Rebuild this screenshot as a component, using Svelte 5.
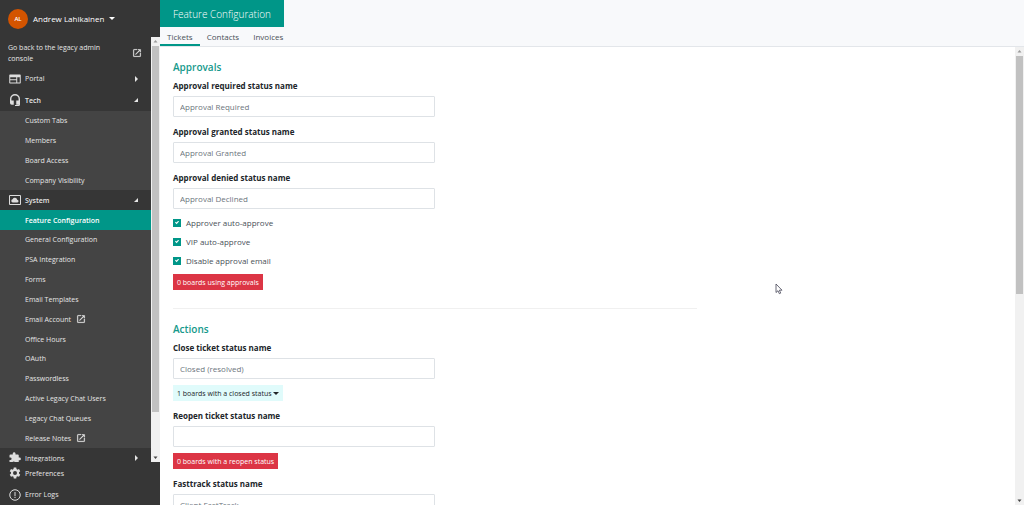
<script>
  const techItems = ['Custom Tabs', 'Members', 'Board Access', 'Company Visibility'];
  const systemItems = [
    { name: 'Feature Configuration', active: true },
    { name: 'General Configuration' },
    { name: 'PSA Integration' },
    { name: 'Forms' },
    { name: 'Email Templates' },
    { name: 'Email Account', external: true },
    { name: 'Office Hours' },
    { name: 'OAuth' },
    { name: 'Passwordless' },
    { name: 'Active Legacy Chat Users' },
    { name: 'Legacy Chat Queues' },
    { name: 'Release Notes', external: true }
  ];
  const tabs = ['Tickets', 'Contacts', 'Invoices'];
  let activeTab = $state('Tickets');
  let approvals = $state([
    { id: 'required', label: 'Approval required status name', value: 'Approval Required' },
    { id: 'granted', label: 'Approval granted status name', value: 'Approval Granted' },
    { id: 'denied', label: 'Approval denied status name', value: 'Approval Declined' }
  ]);
  let options = $state([
    { label: 'Approver auto-approve', on: true },
    { label: 'VIP auto-approve', on: true },
    { label: 'Disable approval email', on: true }
  ]);
  let closeStatus = $state('Closed (resolved)');
  let reopenStatus = $state('');
  let fasttrackStatus = $state('Client FastTrack');
</script>

{#snippet external()}
  <svg class="external" viewBox="0 0 24 24" aria-hidden="true"><path fill="currentColor" stroke="currentColor" stroke-width=".5" d="M14 3v2h3.600l-9.800 9.800 1.400 1.400L19 6.400V10h2V3m-2 16H5V5h7V3H5a2 2 0 0 0-2 2v14a2 2 0 0 0 2 2h14a2 2 0 0 0 2-2v-7h-2z" /></svg>
{/snippet}

{#snippet closedArrow()}
  <svg class="arrow" viewBox="0 0 6 6" aria-hidden="true"><path fill="currentColor" d="M2 0 5 3 2 6z" /></svg>
{/snippet}

{#snippet openArrow()}
  <svg class="arrow" viewBox="0 0 6 6" aria-hidden="true"><path fill="currentColor" d="M5 1v4H1z" /></svg>
{/snippet}

{#snippet scrollbar(kind)}
  <div class="scrollbar {kind}" aria-hidden="true">
    <svg viewBox="0 0 9 9"><path d="M2.500 5.500h4l-2-2.500z" fill="#999" /></svg>
    <div class="track"><div class="thumb"></div></div>
    <svg viewBox="0 0 9 9"><path d="M2.500 3.500h4l-2 2.500z" fill="#444" /></svg>
  </div>
{/snippet}

<div class="app">
  <aside>
    <button class="user">
      <span class="avatar">AL</span>
      <span>Andrew Lahikainen</span>
      <span class="caret"></span>
    </button>
    <div class="nav-area">
      <nav>
        <a class="legacy" href="#legacy"><span>Go back to the legacy admin console</span>{@render external()}</a>
        <button class="group portal">
          <svg class="icon" viewBox="0 0 24 24"><path fill="currentColor" fill-rule="evenodd" d="M2 3h20a1.500 1.500 0 0 1 1.500 1.500v15A1.500 1.500 0 0 1 22 21H2a1.500 1.500 0 0 1-1.500-1.500v-15A1.500 1.500 0 0 1 2 3zm.5 5.500v4h12v-4zm0 6V19h12v-4.500zM16.500 8.500V19h5V8.500z" /></svg>
          <span>Portal</span>{@render closedArrow()}
        </button>
        <button class="group tech open">
          <svg class="icon" viewBox="0 0 24 24"><path fill="currentColor" d="M12 0a10 10 0 0 0-10 10V18a3.500 3.500 0 0 0 3.500 3.500h4V13H4.800v-3a7.200 7.200 0 0 1 14.400 0v3h-4.700v8.500h4.700v.5H12v2h7a3 3 0 0 0 3-3V10A10 10 0 0 0 12 0z" /></svg>
          <span>Tech</span>{@render openArrow()}
        </button>
        <ul class="tech-list">
          {#each techItems as item}
            <li><a href="#tech">{item}</a></li>
          {/each}
        </ul>
        <button class="group open">
          <svg class="icon" viewBox="0 0 24 24"><path fill="none" stroke="currentColor" stroke-width="2" d="M1 3h22v18H1z" /><path fill="currentColor" d="M7.500 17a3.300 3.300 0 0 1-.3-6.500 5 5 0 0 1 9.300.8 2.900 2.900 0 0 1 .3 5.700z" /></svg>
          <span>System</span>{@render openArrow()}
        </button>
        <ul class="system-list">
          {#each systemItems as item}
            <li class:active={item.active}>
              <a href="#system">{item.name}{#if item.external}{@render external()}{/if}</a>
            </li>
          {/each}
        </ul>
        <button class="group integrations">
          <svg class="icon" viewBox="0 0 24 24"><path fill="currentColor" d="M21 11h-1.500V7a2 2 0 0 0-2-2H13V3a2.800 2.800 0 0 0-5.500 0v2H3a2 2 0 0 0-2 2v3.800h1.500a2.700 2.700 0 0 1 0 5.400H1V21a2 2 0 0 0 2 2h3.800v-1.500a2.700 2.700 0 0 1 5.400 0V23h5.300a2 2 0 0 0 2-2v-4.500H21a2.700 2.700 0 0 0 0-5.500z" /></svg>
          <span>Integrations</span>{@render closedArrow()}
        </button>
      </nav>
      {@render scrollbar('side')}
    </div>
    <div class="footer">
      <a href="#preferences">
        <svg class="icon" viewBox="0 0 24 24"><path fill="currentColor" fill-rule="evenodd" d="M9.500 1h5l.5 3.200 2 1.100 3-1.200 2.500 4.300-2.500 2v2.800l2.500 2.200-2.500 4.300-3-1.200-2 1.200-.5 3.300h-5L9 19.700l-2-1.200-3 1.200-2.500-4.300L4 13.200v-2.800l-2.500-2L4 4.100l3 1.200 2-1.100zM12 8a4 4 0 1 0 0 8 4 4 0 0 0 0-8z" /></svg>
        <span>Preferences</span>
      </a>
      <a href="#errors">
        <svg class="icon" viewBox="0 0 24 24"><circle cx="12" cy="12" r="10.500" fill="none" stroke="currentColor" stroke-width="2" /><path fill="currentColor" d="M11 6h2v8h-2zm0 9.500h2v2.500h-2z" /></svg>
        <span>Error Logs</span>
      </a>
    </div>
  </aside>

  <main>
    <header>
      <h1>Feature Configuration</h1>
      <div class="tabs" role="tablist">
        {#each tabs as tab}
          <button role="tab" aria-selected={activeTab === tab} class:selected={activeTab === tab} onclick={() => (activeTab = tab)}>{tab}</button>
        {/each}
      </div>
    </header>
    <div class="body">
      <div class="content">
        <section>
          <h2>Approvals</h2>
          {#each approvals as field}
            <div class="field">
              <label for={field.id}>{field.label}</label>
              <input id={field.id} type="text" bind:value={field.value} />
            </div>
          {/each}
          <div class="checks">
            {#each options as option}
              <label><input type="checkbox" bind:checked={option.on} />{option.label}</label>
            {/each}
          </div>
          <button class="badge danger">0 boards using approvals</button>
        </section>
        <hr />
        <section>
          <h2>Actions</h2>
          <div class="field">
            <label for="close">Close ticket status name</label>
            <input id="close" type="text" bind:value={closeStatus} />
            <button class="badge info">1 boards with a closed status<span class="caret"></span></button>
          </div>
          <div class="field">
            <label for="reopen">Reopen ticket status name</label>
            <input id="reopen" type="text" bind:value={reopenStatus} />
            <button class="badge danger">0 boards with a reopen status</button>
          </div>
          <div class="field">
            <label for="fasttrack">Fasttrack status name</label>
            <input id="fasttrack" type="text" bind:value={fasttrackStatus} />
          </div>
        </section>
      </div>
      {@render scrollbar('page')}
    </div>
  </main>
  <svg class="pointer" viewBox="0 0 8 12" aria-hidden="true"><path d="M1 1v8.500l2-1.800 1.300 3 1.400-.6-1.300-2.900H7z" fill="#fff" stroke="#445" stroke-width=".8" /></svg>
</div>

<style>
  :global(body) { margin: 0; }
  .app, .app * { box-sizing: border-box; }
  .app {
    position: relative;
    display: flex;
    height: 100vh;
    overflow: hidden;
    background: #fff;
    color: #495057;
    font: 8px/12px "Open Sans", "Noto Sans", sans-serif;
  }
  button, input { font: inherit; color: inherit; }
  button { border: 0; padding: 0; background: none; text-align: left; }
  a { color: inherit; text-decoration: none; }
  ul { list-style: none; margin: 0; padding: 0; }
  svg { display: block; flex: none; }

  aside {
    flex: 0 0 160px;
    display: flex;
    flex-direction: column;
    background: #363636;
    color: #e6e6e6;
    font-size: 7px;
    line-height: 11px;
  }
  .user {
    flex: 0 0 37px;
    display: flex;
    align-items: center;
    gap: 5px;
    padding: 0 8px;
    color: #fff;
    font-size: 8px;
  }
  .avatar {
    width: 20px;
    height: 20px;
    border-radius: 50%;
    background: #d35400;
    font-size: 6px;
    font-weight: 600;
    line-height: 20px;
    text-align: center;
  }
  .caret {
    border: 3px solid transparent;
    border-top-color: currentColor;
    border-bottom: 0;
  }
  .nav-area { flex: 1; min-height: 0; display: flex; }
  nav { flex: 1; min-width: 0; display: flex; flex-direction: column; overflow: hidden; }
  .legacy {
    flex: 0 0 31px;
    display: flex;
    align-items: center;
    justify-content: space-between;
    gap: 24px;
    padding: 0 9px 0 8px;
  }
  .external { width: 10px; height: 10px; }
  .group {
    flex: 0 0 20px;
    display: grid;
    grid-template-columns: 12px 1fr 6px;
    align-items: center;
    gap: 4px;
    padding: 0 12px 0 9px;
  }
  .portal { flex-basis: 21px; }
  .tech { flex-basis: 22px; }
  .open { font-weight: 600; }
  .integrations { flex-basis: 14px; min-height: 0; padding-top: 4px; align-content: start; overflow: hidden; }
  .icon { width: 12px; height: 12px; color: #ddd; }
  .arrow { width: 6px; height: 6px; }
  ul { display: flex; flex-direction: column; background: #444; }
  .tech-list { flex: 4 1 0; }
  .system-list { flex: 12 1 0; }
  li { flex: 1; display: flex; }
  li a { flex: 1; display: flex; align-items: center; gap: 5px; padding-left: 25px; }
  .active { background: #009688; color: #fff; font-weight: 600; }
  .footer { flex: none; display: flex; flex-direction: column; height: 43px; }
  .footer a { flex: 1; display: flex; align-items: center; gap: 4px; padding: 1px 0 0 9px; }

  .scrollbar { flex: 0 0 9px; display: flex; flex-direction: column; background: #f1f1f1; }
  .scrollbar svg { width: 9px; height: 9px; }
  .track { flex: 1; padding: 0 1px; }
  .thumb { background: #c1c1c1; }
  .side .thumb { height: 90%; }
  .page .thumb { height: 54%; }

  main { flex: 1; min-width: 0; display: flex; flex-direction: column; }
  header { flex: none; background: #f8f9fb; border-bottom: 1px solid #e3e6ea; }
  h1 {
    width: fit-content;
    margin: 0;
    padding: 1px 13px 0;
    background: #009688;
    color: #fff;
    font-size: 10px;
    font-weight: 300;
    line-height: 26px;
  }
  .tabs { display: flex; height: 19px; }
  .tabs button { padding: 2px 7px 0; border-bottom: 2px solid transparent; }
  .tabs .selected { border-color: #009688; }
  .body { flex: 1; min-height: 0; display: flex; justify-content: space-between; }
  .content { flex: 0 1 550px; padding: 12px 13px 0; overflow: hidden; }
  h2 { margin: 0 0 5px; color: #15998b; font-size: 10px; font-weight: 600; line-height: 16px; }
  .field { margin-bottom: 9px; }
  .field label { display: block; margin-bottom: 4px; color: #212529; font-weight: 700; }
  .field input {
    display: block;
    width: 50%;
    height: 21px;
    padding: 0 6px;
    border: 1px solid #dee2e6;
    border-radius: 1px;
    background: #fff;
    color: #6c757d;
  }
  .checks { margin: -5px 0 4px; }
  .checks label { display: flex; align-items: center; gap: 5px; height: 19px; }
  .checks input {
    appearance: none;
    display: grid;
    place-items: center;
    width: 8px;
    height: 8px;
    margin: 0;
    border: 1px solid #009688;
  }
  .checks input:checked { background: #009688; }
  .checks input:checked::before {
    content: "";
    width: 4px;
    height: 4px;
    background: #fff;
    clip-path: polygon(0 50%, 20% 30%, 40% 50%, 80% 5%, 100% 25%, 40% 95%);
  }
  .badge {
    display: flex;
    align-items: center;
    gap: 1px;
    height: 16px;
    padding: 1px 4px 0;
    font-size: 7px;
  }
  .field .badge { margin-top: 6px; }
  .danger { background: #dc3545; color: #fff; }
  .info { background: #e0fbfb; color: #212529; }
  hr { margin: 18px 0 12px; border: 0; border-top: 1px solid #f0f0f0; }
  .pointer { position: absolute; left: 775px; top: 283px; width: 8px; height: 12px; }
</style>
